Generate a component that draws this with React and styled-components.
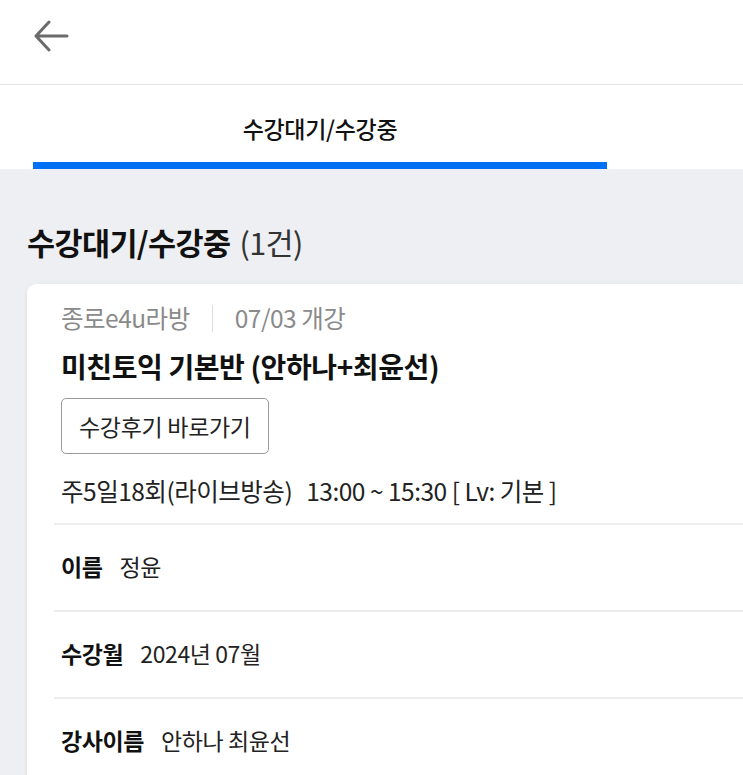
import React from 'react';
import styled, { createGlobalStyle } from 'styled-components';

const GlobalStyle = createGlobalStyle`
  html, body {
    margin: 0;
    padding: 0;
    background: #eeeff3;
    font-family: "Noto Sans CJK KR", "Noto Sans", sans-serif;
    overflow: hidden;
  }
  * { box-sizing: border-box; }
`;

const Page = styled.div`
  width: 743px;
  min-height: 775px;
  background: #eeeff3;
`;

const Header = styled.header`
  height: 85px;
  background: #fff;
  border-bottom: 1px solid #e4e4e6;
  display: flex;
  align-items: flex-start;
  padding: 20px 0 0 31px;
`;

const BackButton = styled.button`
  width: 40px;
  height: 34px;
  border: none;
  background: none;
  padding: 0;
  cursor: pointer;
  display: flex;
  align-items: center;
  justify-content: center;
`;

const TabBar = styled.nav`
  height: 84px;
  background: #fff;
  display: flex;
  padding-left: 33px;
`;

const Tab = styled.div`
  width: 574px;
  display: flex;
  align-items: center;
  justify-content: center;
  font-size: 23px;
  font-weight: 500;
  color: #111;
  letter-spacing: -0.3px;
  border-bottom: 7px solid ${props => (props.active ? '#0070f5' : 'transparent')};
  padding-top: 8px;
`;

const Content = styled.main`
  padding: 55px 0 0 27px;
`;

const SectionTitle = styled.h2`
  margin: 0 0 24px;
  font-size: 30.5px;
  font-weight: 700;
  color: #111;
  letter-spacing: -0.6px;
  line-height: 36px;
`;

const Count = styled.span`
  font-weight: 400;
  color: #333;
  margin-left: 9px;
`;

const Card = styled.section`
  background: #fff;
  border-radius: 9px 0 0 0;
  box-shadow: 0 1px 4px rgba(0, 0, 0, 0.08);
  padding: 17px 0 0 27px;
  min-height: 500px;
`;

const CardTop = styled.div`
  padding-left: 7px;
`;

const Meta = styled.div`
  display: flex;
  align-items: center;
  font-size: 24.5px;
  color: #8a8a8a;
  letter-spacing: -0.5px;
  line-height: 34px;
`;

const MetaDivider = styled.span`
  width: 1px;
  height: 27px;
  background: #dcdcdc;
  margin: 0 22px 0 22px;
`;

const CourseTitle = styled.h3`
  margin: 13px 0 14px;
  font-size: 28px;
  font-weight: 700;
  color: #111;
  letter-spacing: -0.4px;
  line-height: 36px;
`;

const ReviewButton = styled.button`
  height: 56px;
  padding: 0 17px;
  border: 1px solid #9a9a9a;
  border-radius: 5px;
  background: #fff;
  font-family: inherit;
  font-size: 23px;
  color: #222;
  letter-spacing: -0.3px;
  cursor: pointer;
`;

const Schedule = styled.p`
  margin: 19px 0 0;
  font-size: 24.5px;
  color: #222;
  letter-spacing: -0.5px;
  line-height: 36px;
  padding-bottom: 14px;
`;

const Gap = styled.span`
  display: inline-block;
  width: 14px;
`;

const InfoList = styled.dl`
  margin: 0;
`;

const InfoRow = styled.div`
  height: 87px;
  border-top: 2px solid #ededed;
  display: flex;
  align-items: center;
  padding: 0 0 3px 7px;
  font-size: 23px;
  letter-spacing: -0.4px;
`;

const Label = styled.dt`
  font-weight: 700;
  color: #111;
  margin-right: 17px;
`;

const Value = styled.dd`
  margin: 0;
  color: #222;
`;

const info = [
  { label: '이름', value: '정윤' },
  { label: '수강월', value: '2024년 07월' },
  { label: '강사이름', value: '안하나 최윤선' },
];

const App = () => (
  <Page>
    <GlobalStyle />
    <Header>
      <BackButton aria-label="뒤로">
        <svg width="36" height="34" viewBox="0 0 36 34" fill="none">
          <path d="M34 16H3M16 2L3 16l13 14" stroke="#6b6b6b" strokeWidth="3" strokeLinecap="round" strokeLinejoin="round" />
        </svg>
      </BackButton>
    </Header>
    <TabBar>
      <Tab active>수강대기/수강중</Tab>
    </TabBar>
    <Content>
      <SectionTitle>
        수강대기/수강중<Count>(1건)</Count>
      </SectionTitle>
      <Card>
        <CardTop>
          <Meta>
            종로e4u라방
            <MetaDivider />
            07/03 개강
          </Meta>
          <CourseTitle>미친토익 기본반 (안하나+최윤선)</CourseTitle>
          <ReviewButton>수강후기 바로가기</ReviewButton>
          <Schedule>
            주5일18회(라이브방송)<Gap />13:00 ~ 15:30 [ Lv: 기본 ]
          </Schedule>
        </CardTop>
        <InfoList>
          {info.map(item => (
            <InfoRow key={item.label}>
              <Label>{item.label}</Label>
              <Value>{item.value}</Value>
            </InfoRow>
          ))}
        </InfoList>
      </Card>
    </Content>
  </Page>
);

export default App;
